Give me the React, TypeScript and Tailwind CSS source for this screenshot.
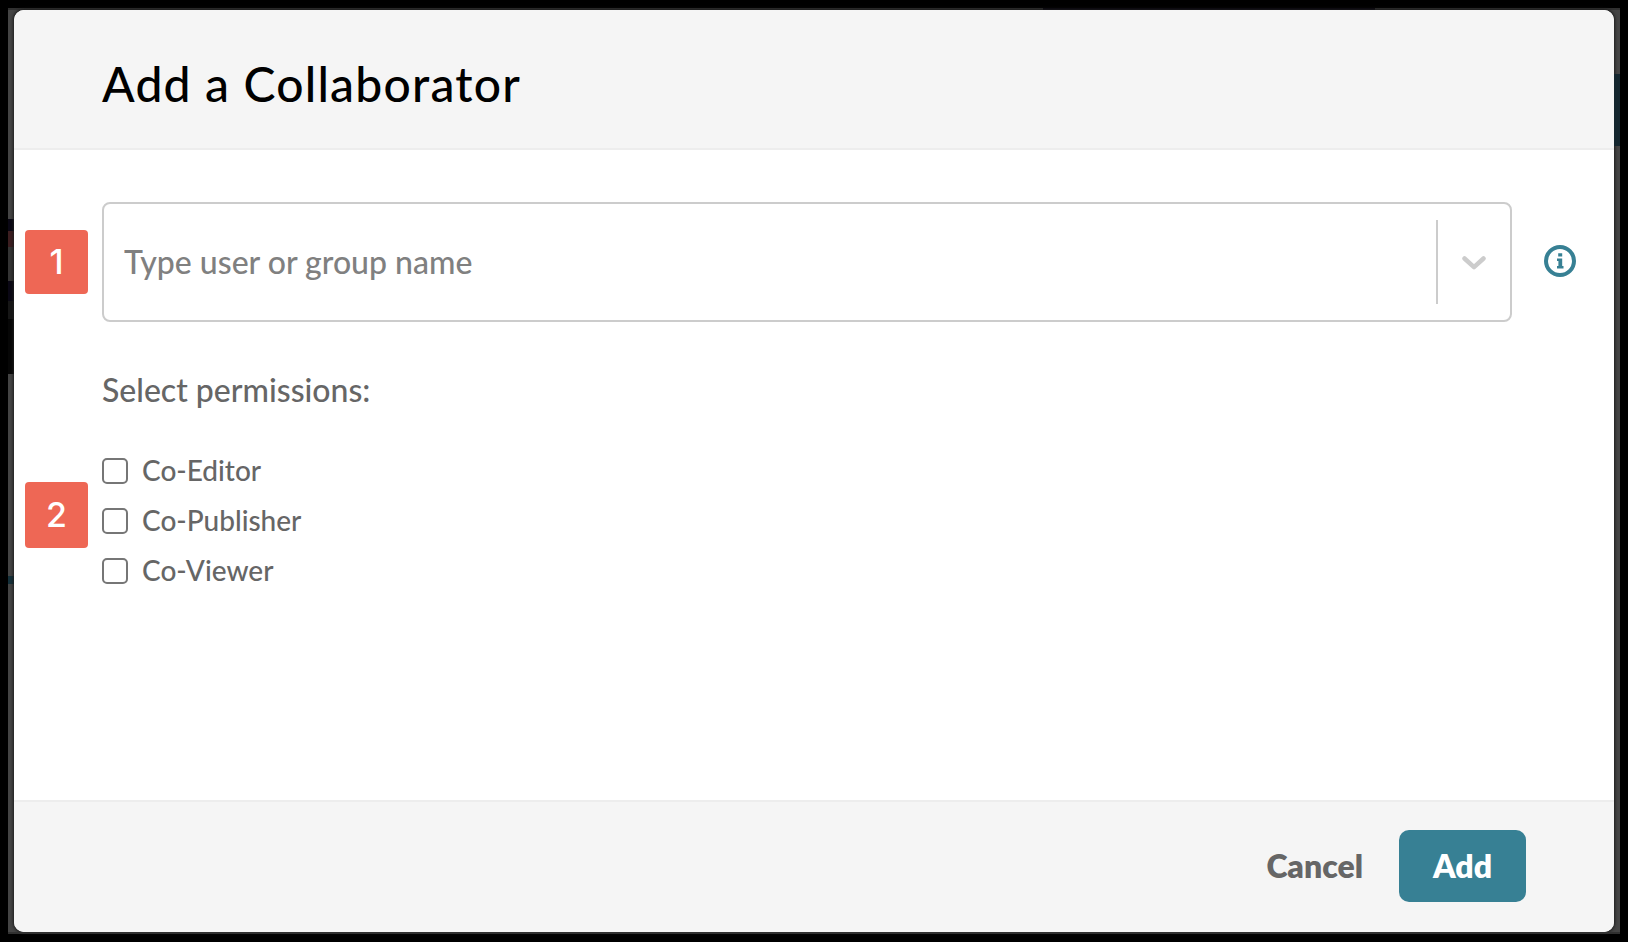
import React from "react";

const permissions = ["Co-Editor", "Co-Publisher", "Co-Viewer"];

function Marker({ children, className }: { children: React.ReactNode; className: string }) {
  return (
    <span
      aria-hidden="true"
      className={`absolute -left-[77px] flex w-[63px] items-center justify-center rounded bg-[#ee6755] pb-0.5 font-['Inter',sans-serif] text-[34px] font-medium text-white ${className}`}
    >
      {children}
    </span>
  );
}

function InfoIcon() {
  return (
    <svg viewBox="0 0 32 32" className="size-8" aria-hidden="true">
      <circle cx="16" cy="16" r="14" fill="none" stroke="#378094" strokeWidth="4" />
      <path
        fill="#378094"
        d="M14.2 8.3h4v3.2h-4zM13 13.4h5.2v7.6h1.3v2.5H13V21h1.4v-5.100H13z"
      />
    </svg>
  );
}

function LeftBackdrop() {
  return (
    <div className="flex w-1.5 flex-col overflow-hidden" aria-hidden="true">
      <div className="h-[209px]" />
      <div className="h-3 bg-[#0a0714]" />
      <div className="h-4 bg-[#3c1e20]" />
      <div className="h-[34px] bg-[#343434]" />
      <div className="h-5 bg-[#0a0714]" />
      <div className="h-[18px] bg-[#161616]" />
      <div className="h-[55px] bg-[#060606]" />
      <div className="h-[202px]" />
      <div className="h-2 bg-[#14303a]" />
    </div>
  );
}

function RightBackdrop() {
  return (
    <div className="flex w-1.5 flex-col overflow-hidden" aria-hidden="true">
      <div className="h-16" />
      <div className="h-[72px] bg-[#14262e]" />
    </div>
  );
}

export default function App() {
  return (
    <div className="flex min-h-screen bg-black p-2 font-['Lato',sans-serif]">
      <div className="flex flex-1 flex-col bg-[#444444]">
        <div className="flex h-0.5 bg-[#303030]" aria-hidden="true">
          <div className="flex-[1035]" />
          <div className="flex-[332] bg-[#05020c]" />
          <div className="flex-[245]" />
        </div>
        <div className="flex flex-1">
          <LeftBackdrop />
          <main
            role="dialog"
            aria-labelledby="dialog-title"
            className="flex flex-1 flex-col overflow-hidden rounded-[10px] bg-white shadow-[0_0_3px_1px_#1c1c1c]"
          >
            <header className="flex h-[140px] items-center border-b-2 border-[#ededed] bg-[#f5f5f5] px-[88px] pt-2.5">
              <h1 id="dialog-title" className="text-5xl font-medium tracking-wide text-black">
                Add a Collaborator
              </h1>
            </header>

            <form className="flex flex-1 flex-col" onSubmit={(e) => e.preventDefault()}>
              <div className="flex-1 px-[88px] pt-[52px] text-[#666666]">
                <div className="relative -mr-[50px] flex items-center gap-8">
                  <Marker className="h-16">1</Marker>
                  <div className="flex h-[120px] flex-1 items-center rounded-lg border-2 border-[#cccccc]">
                    <input
                      type="text"
                      aria-label="User or group name"
                      placeholder="Type user or group name"
                      className="h-full min-w-0 flex-1 bg-transparent px-5 pb-0.5 text-[32px] font-medium text-[#333333] outline-none placeholder:text-[#808080]"
                    />
                    <span className="h-[84px] w-0.5 bg-[#cccccc]" />
                    <button type="button" aria-label="Show options" className="flex w-[72px] justify-center pt-0.5">
                      <svg viewBox="0 0 24 14" className="h-3.5 w-6" aria-hidden="true">
                        <path
                          d="M2.500 2.500 12 11.200 21.500 2.500"
                          fill="none"
                          stroke="#cccccc"
                          strokeWidth="4.500"
                          strokeLinecap="round"
                          strokeLinejoin="round"
                        />
                      </svg>
                    </button>
                  </div>
                  <button type="button" aria-label="More information" className="pb-0.5">
                    <InfoIcon />
                  </button>
                </div>

                <fieldset className="relative mt-12">
                  <legend className="text-[32px] leading-10 font-medium">Select permissions:</legend>
                  <Marker className="top-[72px] h-[66px]">2</Marker>
                  <div className="mt-9">
                    {permissions.map((name) => (
                      <label key={name} className="flex h-[50px] items-center gap-3.5 text-[28px] font-medium">
                        <input
                          type="checkbox"
                          className="size-[26px] appearance-none rounded-[5px] border-2 border-[#767676] bg-white checked:bg-[#378094]"
                        />
                        <span className="pb-0.5">{name}</span>
                      </label>
                    ))}
                  </div>
                </fieldset>
              </div>

              <footer className="flex h-[132px] items-center justify-end gap-9 border-t-2 border-[#ededed] bg-[#f5f5f5] px-[88px] pb-0.5 text-[32px] font-extrabold">
                <button type="button" className="text-[#666666]">
                  Cancel
                </button>
                <button type="submit" className="h-[72px] w-[127px] rounded-[10px] bg-[#378094] text-white">
                  Add
                </button>
              </footer>
            </form>
          </main>
          <RightBackdrop />
        </div>
        <div className="h-0.5 bg-[#303030]" aria-hidden="true" />
      </div>
    </div>
  );
}
